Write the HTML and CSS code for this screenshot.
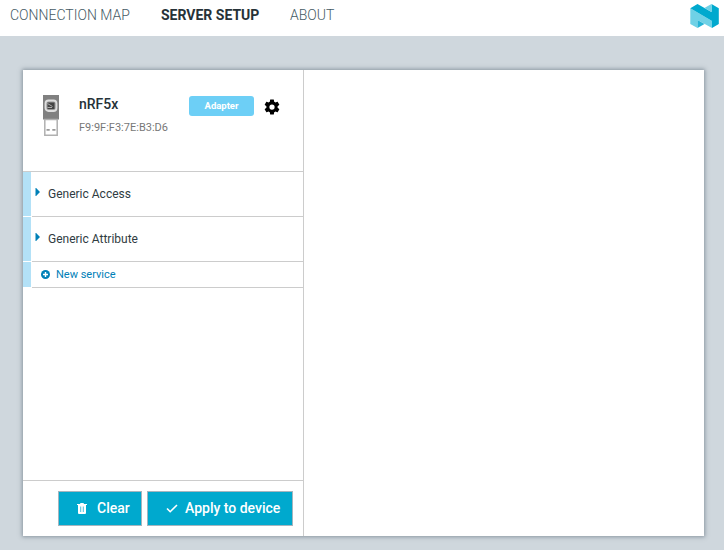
FILE: index.html
```html
<!DOCTYPE html>
<html lang="en">
<head>
<meta charset="utf-8">
<title>Server setup</title>
<link rel="stylesheet" href="styles.css">
</head>
<body>
<header class="topbar">
  <nav class="nav">
    <a class="nav-map">CONNECTION MAP</a>
    <a class="nav-server active">SERVER SETUP</a>
    <a class="nav-about">ABOUT</a>
  </nav>
  <svg class="logo" width="30" height="24" viewBox="0 0 30 24">
    <path fill="#6fd1e6" d="M0.300 4.200L22 17V24L7.500 16V24L0.300 20Z"/>
    <path fill="#00a9ce" d="M0.300 4.200L7.500 0L21.500 8V0L28.800 4.200V20L22 24V17Z"/>
    <path fill="#6fd1e6" d="M14.300 3.900L21.500 0V8Z"/>
    <path fill="#26b4d6" d="M7.500 16L14.500 20L7.500 24Z"/>
  </svg>
</header>
<main class="panel">
  <section class="sidebar">
    <div class="device">
      <svg class="dongle" width="16" height="41" viewBox="0 0 16 41">
        <path fill="#808080" d="M0 0h16v24.500H0z"/>
        <rect x="2.500" y="5.500" width="11" height="10.500" rx="3" fill="#999" stroke="#dedede" stroke-width="1.800"/>
        <path fill="#444" d="M4.500 7.500h7v6.500h-7z"/>
        <path stroke="#aaa" d="M4.500 8.500l5 3M4.500 12.500h4.500"/>
        <path fill="#fff" stroke="#b0b0b0" stroke-width="1.500" d="M1.800 24.500h12.400v15.700H1.800z"/>
        <path fill="#999" d="M3.500 34h3.200v1.800H3.500zM9.300 34h3.200v1.800H9.300z"/>
      </svg>
      <div class="identity">
        <div class="name">nRF5x</div>
        <div class="address">F9:9F:F3:7E:B3:D6</div>
      </div>
      <span class="badge">Adapter</span>
      <svg class="gear" width="18" height="18" viewBox="0 0 24 24"><path d="M19.430 12.980c.04-.32.07-.64.07-.98s-.03-.66-.07-.98l2.110-1.650c.19-.15.24-.42.12-.64l-2-3.460c-.12-.22-.39-.3-.61-.22l-2.490 1c-.52-.4-1.080-.73-1.690-.98l-.38-2.650A.488.488 0 0 0 14 2h-4c-.25 0-.46.18-.49.42l-.38 2.650c-.61.25-1.170.59-1.690.98l-2.490-1c-.23-.09-.49 0-.61.22l-2 3.460c-.13.22-.07.49.12.64l2.110 1.650c-.04.32-.07.65-.07.98s.03.66.07.98l-2.110 1.650c-.19.15-.24.42-.12.64l2 3.460c.12.22.39.3.61.22l2.490-1c.52.4 1.080.73 1.690.98l.38 2.650c.03.24.24.42.49.42h4c.25 0 .46-.18.49-.42l.38-2.650c.61-.25 1.170-.59 1.690-.98l2.490 1c.23.09.49 0 .61-.22l2-3.460c.12-.22.07-.49-.12-.64zM12 15.500a3.500 3.500 0 1 1 0-7 3.500 3.500 0 0 1 0 7z"/></svg>
    </div>
    <div class="services">
      <div class="service"><div class="row">
        <svg class="caret" width="5" height="8" viewBox="0 0 5 8"><path d="M.5 0h.6l3.900 4-3.900 4H.5z"/></svg><span>Generic Access</span>
      </div></div>
      <div class="service"><div class="row">
        <svg class="caret" width="5" height="8" viewBox="0 0 5 8"><path d="M.5 0h.6l3.900 4-3.900 4H.5z"/></svg><span>Generic Attribute</span>
      </div></div>
      <div class="service add"><div class="row">
        <svg class="plus" width="9" height="9" viewBox="0 0 9 9"><circle cx="4.500" cy="4.500" r="4.500"/><path stroke="#fff" stroke-width="1.400" d="M2 4.500h5M4.500 2v5"/></svg><span>New service</span>
      </div></div>
    </div>
    <footer class="actions">
      <button class="clear"><svg width="10" height="11" viewBox="0 0 10 11"><path fill="#fff" d="M0 1h3L3.500 0h3L7 1h3v1H0zM1 2h8v8q0 1-1 1H2q-1 0-1-1z"/><path stroke="#00a9ce" stroke-width=".7" d="M3.700 3.500v5.500M6.300 3.500v5.500"/></svg><span>Clear</span></button>
      <button class="apply"><svg width="12" height="9" viewBox="0 0 12 9"><path fill="none" stroke="#fff" stroke-width="1.600" d="M1 4.500l3.200 3.200L11 1"/></svg><span>Apply to device</span></button>
    </footer>
  </section>
  <section class="details"></section>
</main>
</body>
</html>
```
FILE: styles.css
```css
* { box-sizing: border-box; }
body {
  margin: 0;
  height: 550px;
  overflow: hidden;
  background: #cfd7dd;
  color: #263238;
  font-family: Roboto, "Liberation Sans", sans-serif;
}
svg { display: block; flex: none; }
span, .name, .address, .nav a { white-space: nowrap; }
.topbar {
  display: flex;
  justify-content: space-between;
  height: 36px;
  padding: 4px 4px 0 10px;
  background: #fff;
}
.nav {
  display: flex;
  padding-top: 3px;
  font-size: 14px;
  line-height: 16px;
  font-weight: 300;
  color: #455a64;
}
.nav-map { width: 151px; }
.nav-server { width: 129px; }
.nav .active { font-weight: 700; color: #263238; }
.panel {
  display: flex;
  width: 681px;
  height: 466px;
  margin: 34px 0 0 23px;
  background: #fff;
  box-shadow: 0 0 4px 1px rgba(70, 85, 100, .5);
}
.sidebar {
  display: flex;
  flex-direction: column;
  width: 281px;
  border-right: 1px solid #ccc;
}
.details { flex: 1; }
.device {
  display: flex;
  align-items: flex-start;
  height: 102px;
  padding: 25px 0 0 20px;
  border-bottom: 1px solid #ccc;
}
.identity { width: 110px; margin-left: 20px; }
.name { font-size: 14px; line-height: 18px; font-weight: 500; }
.address { margin-top: 8px; font-size: 11px; line-height: 14px; color: #777; }
.badge {
  width: 65px;
  height: 20px;
  margin-top: 1px;
  border-radius: 3px;
  background: #6dcff6;
  color: #fff;
  font-size: 9.5px;
  line-height: 20px;
  font-weight: 700;
  text-align: center;
}
.gear { margin: 3px 0 0 9px; }
.services { flex: 1; font-size: 12px; color: #303c42; }
.service {
  display: flex;
  height: 45px;
}
.service::before {
  content: "";
  width: 8px;
  margin: 0 1px 1px 0;
  background: #b3e1f7;
}
.row {
  display: flex;
  flex: 1;
  align-items: center;
  border-bottom: 1px solid #ccc;
}
.caret { margin: 0 8px 4px 3px; fill: #0080b7; }
.add { height: 26px; font-size: 11px; color: #0080b7; }
.plus { margin: 0 6px 0 9px; fill: #0080b7; }
.actions {
  display: flex;
  justify-content: flex-end;
  gap: 5px;
  height: 56px;
  padding: 10px 10px 0 0;
  border-top: 1px solid #ccc;
}
button {
  display: flex;
  align-items: center;
  height: 35px;
  padding: 0 0 1px;
  border: 1px solid #a5b5be;
  background: #00a9ce;
  color: #fff;
  font: 500 14px/20px Roboto, "Liberation Sans", sans-serif;
}
.clear { width: 84px; padding-left: 18px; gap: 10px; }
.apply { width: 146px; padding-left: 18px; gap: 7px; }
```
